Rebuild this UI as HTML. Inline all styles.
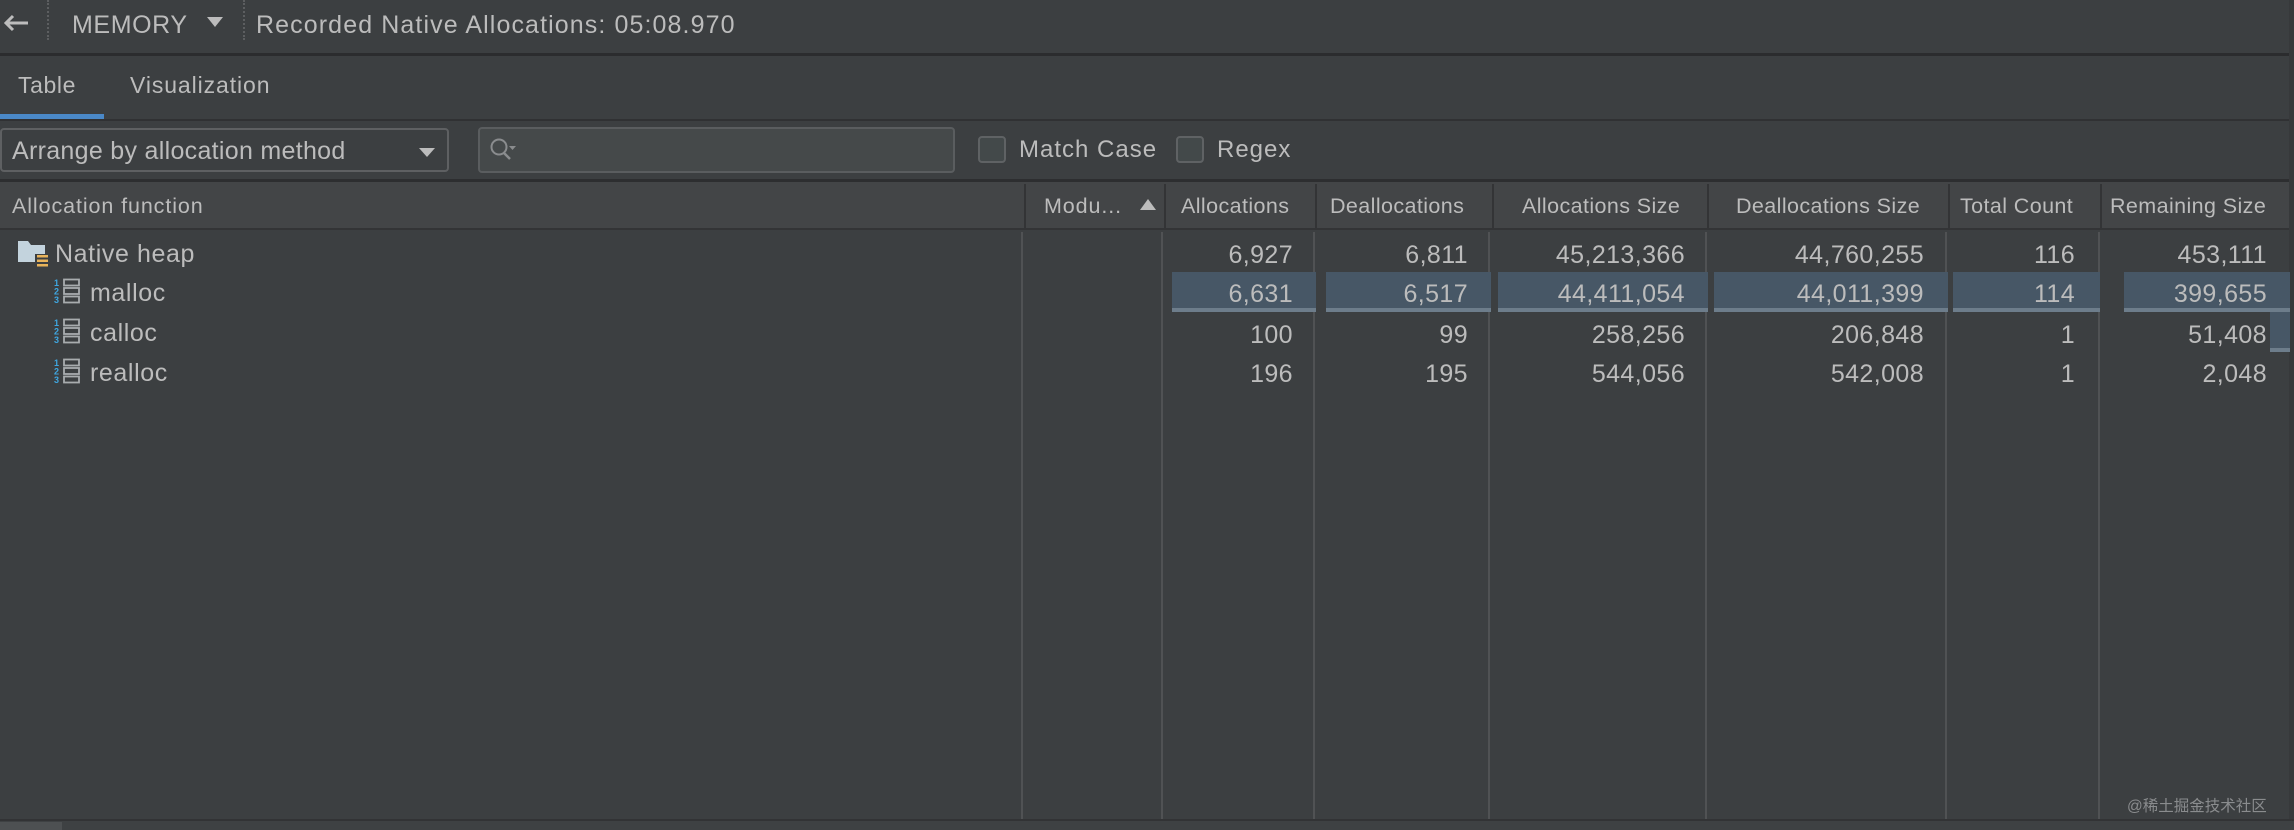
<!DOCTYPE html>
<html><head><meta charset="utf-8"><style>
*{margin:0;padding:0;box-sizing:border-box}
body{width:2294px;height:830px;background:#3c3f41;position:relative;overflow:hidden;font-family:"Liberation Sans","Noto Sans CJK SC",sans-serif;color:#bcbcbc}
.a{position:absolute}
.t{position:absolute;white-space:nowrap;line-height:1}
.hl{position:absolute;background:#475766;border-bottom:4px solid #6d7d8b}
.vd{position:absolute;width:2px;background:#505254}
.num{position:absolute;white-space:nowrap;font-size:25px;line-height:1;text-align:right;letter-spacing:0.4px}
.h{font-size:21.5px;letter-spacing:0.9px}
</style></head><body>
<!-- top bar -->
<svg class="a" style="left:2px;top:13px" width="28" height="20" viewBox="0 0 28 20"><path d="M26 10H4M11 3L4 10L11 17" stroke="#bdbdbd" stroke-width="3" fill="none"/></svg>
<div class="a" style="left:47px;top:0;height:40px;border-left:2px dotted #5c5e60"></div>
<div class="t" style="left:72px;top:13px;font-size:25px;letter-spacing:0.6px">MEMORY</div>
<div class="a" style="left:207px;top:17px;width:0;height:0;border-left:8px solid transparent;border-right:8px solid transparent;border-top:10px solid #bcbcbc"></div>
<div class="a" style="left:243px;top:0;height:40px;border-left:2px dotted #5c5e60"></div>
<div class="t" style="left:256px;top:13px;font-size:25px;letter-spacing:1.1px">Recorded Native Allocations: 05:08.970</div>
<div class="a" style="left:0;top:53px;width:2294px;height:3px;background:#2b2c2e"></div>
<!-- tabs -->
<div class="t" style="left:18px;top:74px;font-size:23px;letter-spacing:0.6px">Table</div>
<div class="t" style="left:130px;top:74px;font-size:23px;letter-spacing:0.9px">Visualization</div>
<div class="a" style="left:0;top:114px;width:104px;height:5px;background:#4a88c7"></div>
<div class="a" style="left:0;top:119px;width:2294px;height:2px;background:#303133"></div>
<!-- toolbar -->
<div class="a" style="left:0;top:128px;width:449px;height:44px;border:2px solid #5e6062;border-radius:4px;background:#3c3f41"></div>
<div class="t" style="left:12px;top:139px;font-size:25px;letter-spacing:0.3px">Arrange by allocation method</div>
<div class="a" style="left:419px;top:148px;width:0;height:0;border-left:8px solid transparent;border-right:8px solid transparent;border-top:9px solid #bcbcbc"></div>
<div class="a" style="left:478px;top:127px;width:477px;height:46px;border:2px solid #5a5d5f;border-radius:4px;background:#45494a"></div>
<svg class="a" style="left:489px;top:136px" width="30" height="28" viewBox="0 0 30 28"><circle cx="10" cy="11" r="7.5" stroke="#8a8c8e" stroke-width="2" fill="none"/><path d="M15 17L21 23" stroke="#8a8c8e" stroke-width="2.5"/><path d="M20 10h7l-3.5 4z" fill="#8a8c8e"/></svg>
<div class="a" style="left:978px;top:136px;width:28px;height:27px;border:2px solid #5f6264;border-radius:4px;background:#43494a"></div>
<div class="t" style="left:1019px;top:138px;font-size:24px;letter-spacing:1px">Match Case</div>
<div class="a" style="left:1176px;top:136px;width:28px;height:27px;border:2px solid #5f6264;border-radius:4px;background:#43494a"></div>
<div class="t" style="left:1217px;top:138px;font-size:24px;letter-spacing:1px">Regex</div>
<div class="a" style="left:0;top:179px;width:2294px;height:3px;background:#2d2e30"></div>
<!-- header -->
<div class="a" style="left:0;top:182px;width:2290px;height:48px;background:#434547;border-bottom:2px solid #333436"></div>
<div class="vd" style="left:1024px;top:184px;height:44px;background:#333436"></div>
<div class="vd" style="left:1164px;top:184px;height:44px;background:#333436"></div>
<div class="vd" style="left:1315px;top:184px;height:44px;background:#333436"></div>
<div class="vd" style="left:1492px;top:184px;height:44px;background:#333436"></div>
<div class="vd" style="left:1707px;top:184px;height:44px;background:#333436"></div>
<div class="vd" style="left:1948px;top:184px;height:44px;background:#333436"></div>
<div class="vd" style="left:2100px;top:184px;height:44px;background:#333436"></div>
<div class="t h" style="left:12px;top:196px">Allocation function</div>
<div class="t h" style="left:1044px;top:196px">Modu...</div>
<div class="a" style="left:1140px;top:199px;width:0;height:0;border-left:8px solid transparent;border-right:8px solid transparent;border-bottom:11px solid #bcbcbc"></div>
<div class="t h" style="left:1181px;top:196px;letter-spacing:0.4px">Allocations</div>
<div class="t h" style="left:1330px;top:196px;letter-spacing:0.4px">Deallocations</div>
<div class="t h" style="left:1522px;top:196px;letter-spacing:0.4px">Allocations Size</div>
<div class="t h" style="left:1736px;top:196px;letter-spacing:0.4px">Deallocations Size</div>
<div class="t h" style="left:1960px;top:196px;letter-spacing:0.4px">Total Count</div>
<div class="t h" style="left:2110px;top:196px;letter-spacing:0.4px">Remaining Size</div>
<div class="a" style="left:2289px;top:0;width:5px;height:830px;background:#37393b"></div>
<!-- body dividers -->
<div class="vd" style="left:1021px;top:232px;height:588px"></div>
<div class="vd" style="left:1161px;top:232px;height:588px"></div>
<div class="vd" style="left:1313px;top:232px;height:588px"></div>
<div class="vd" style="left:1488px;top:232px;height:588px"></div>
<div class="vd" style="left:1705px;top:232px;height:588px"></div>
<div class="vd" style="left:1945px;top:232px;height:588px"></div>
<div class="vd" style="left:2098px;top:232px;height:588px"></div>
<!-- highlights -->
<div class="hl" style="left:1172px;top:272px;width:144px;height:40px"></div>
<div class="hl" style="left:1326px;top:272px;width:165px;height:40px"></div>
<div class="hl" style="left:1498px;top:272px;width:210px;height:40px"></div>
<div class="hl" style="left:1714px;top:272px;width:234px;height:40px"></div>
<div class="hl" style="left:1953px;top:272px;width:147px;height:40px"></div>
<div class="hl" style="left:2124px;top:272px;width:166px;height:40px"></div>
<div class="hl" style="left:2270px;top:312px;width:20px;height:40px"></div>
<!-- tree -->
<svg class="a" style="left:17px;top:240px" width="32" height="28" viewBox="0 0 32 28"><path d="M1 1h10l3 4h14v17H1z" fill="#c3d3dd"/><rect x="18" y="14" width="14" height="14" fill="#3c3f41"/><rect x="20" y="15" width="11" height="2.5" fill="#e8b35a"/><rect x="20" y="19.5" width="11" height="2.5" fill="#e8b35a"/><rect x="20" y="24" width="11" height="2.5" fill="#e8b35a"/></svg>
<div class="t" style="left:55px;top:242px;font-size:25px;letter-spacing:0.6px">Native heap</div>
<svg class="a" style="left:53px;top:278px" width="28" height="26" viewBox="0 0 28 26"><g font-family="Liberation Sans" font-size="9" font-weight="bold" fill="#3fa6e0"><text x="1" y="8">1</text><text x="1" y="16.5">2</text><text x="1" y="25">3</text></g><g fill="none" stroke="#a8acae" stroke-width="1.8"><rect x="11" y="1.5" width="15" height="6"/><rect x="11" y="10" width="15" height="6"/><rect x="11" y="18.5" width="15" height="6"/></g></svg>
<div class="t" style="left:90px;top:281px;font-size:25px;letter-spacing:0.6px">malloc</div>
<svg class="a" style="left:53px;top:318px" width="28" height="26" viewBox="0 0 28 26"><g font-family="Liberation Sans" font-size="9" font-weight="bold" fill="#3fa6e0"><text x="1" y="8">1</text><text x="1" y="16.5">2</text><text x="1" y="25">3</text></g><g fill="none" stroke="#a8acae" stroke-width="1.8"><rect x="11" y="1.5" width="15" height="6"/><rect x="11" y="10" width="15" height="6"/><rect x="11" y="18.5" width="15" height="6"/></g></svg>
<div class="t" style="left:90px;top:321px;font-size:25px;letter-spacing:0.6px">calloc</div>
<svg class="a" style="left:53px;top:358px" width="28" height="26" viewBox="0 0 28 26"><g font-family="Liberation Sans" font-size="9" font-weight="bold" fill="#3fa6e0"><text x="1" y="8">1</text><text x="1" y="16.5">2</text><text x="1" y="25">3</text></g><g fill="none" stroke="#a8acae" stroke-width="1.8"><rect x="11" y="1.5" width="15" height="6"/><rect x="11" y="10" width="15" height="6"/><rect x="11" y="18.5" width="15" height="6"/></g></svg>
<div class="t" style="left:90px;top:361px;font-size:25px;letter-spacing:0.6px">realloc</div>
<!-- numbers -->
<div class="num" style="right:1001px;top:243px">6,927</div>
<div class="num" style="right:826px;top:243px">6,811</div>
<div class="num" style="right:609px;top:243px">45,213,366</div>
<div class="num" style="right:370px;top:243px">44,760,255</div>
<div class="num" style="right:219px;top:243px">116</div>
<div class="num" style="right:27px;top:243px">453,111</div>
<div class="num" style="right:1001px;top:282px">6,631</div>
<div class="num" style="right:826px;top:282px">6,517</div>
<div class="num" style="right:609px;top:282px">44,411,054</div>
<div class="num" style="right:370px;top:282px">44,011,399</div>
<div class="num" style="right:219px;top:282px">114</div>
<div class="num" style="right:27px;top:282px">399,655</div>
<div class="num" style="right:1001px;top:323px">100</div>
<div class="num" style="right:826px;top:323px">99</div>
<div class="num" style="right:609px;top:323px">258,256</div>
<div class="num" style="right:370px;top:323px">206,848</div>
<div class="num" style="right:219px;top:323px">1</div>
<div class="num" style="right:27px;top:323px">51,408</div>
<div class="num" style="right:1001px;top:362px">196</div>
<div class="num" style="right:826px;top:362px">195</div>
<div class="num" style="right:609px;top:362px">544,056</div>
<div class="num" style="right:370px;top:362px">542,008</div>
<div class="num" style="right:219px;top:362px">1</div>
<div class="num" style="right:27px;top:362px">2,048</div>
<!-- bottom -->
<div class="t" style="left:2127px;top:799px;font-size:15.5px;color:#8a8c8e">@稀土掘金技术社区</div>
<div class="a" style="left:0;top:819px;width:2294px;height:2px;background:#323335"></div>
<div class="a" style="left:0;top:821px;width:2294px;height:9px;background:#3e4143"></div>
<div class="a" style="left:0;top:822px;width:62px;height:8px;background:#4d5052"></div>
</body></html>
